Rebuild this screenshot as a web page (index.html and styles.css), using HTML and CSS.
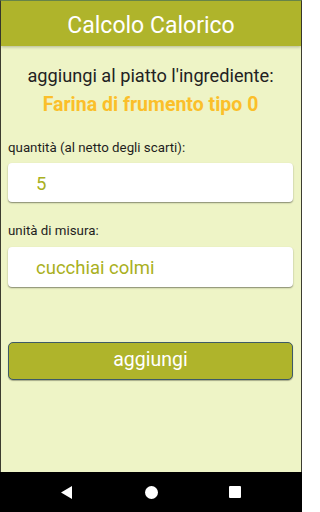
FILE: index.html
```html
<!DOCTYPE html>
<html>
<head>
<meta charset="utf-8">
<link rel="stylesheet" href="styles.css">
</head>
<body>
<div class="screen">
  <header class="appbar">Calcolo Calorico</header>
  <main class="content">
    <p class="intro">aggiungi al piatto l'ingrediente:</p>
    <p class="ingredient">Farina di frumento tipo 0</p>
    <label class="label">quantità (al netto degli scarti):</label>
    <div class="field">5</div>
    <label class="label second">unità di misura:</label>
    <div class="field tall">cucchiai colmi</div>
    <button class="btn">aggiungi</button>
  </main>
  <nav class="navbar">
    <svg width="12" height="13" viewBox="0 0 12 13"><polygon points="11,0 11,13 0,6.5" fill="#fff"/></svg>
    <svg width="13" height="13" viewBox="0 0 13 13"><circle cx="6.5" cy="6.5" r="6.5" fill="#fff"/></svg>
    <svg width="12" height="12" viewBox="0 0 12 12"><rect x="0" y="0" width="12" height="12" rx="1" fill="#fff"/></svg>
  </nav>
</div>
</body>
</html>
```
FILE: styles.css
```css
* { box-sizing: border-box; }
html, body { margin: 0; padding: 0; }
body { width: 302px; height: 512px; overflow: hidden; font-family: Roboto, "Liberation Sans", sans-serif; }
.screen {
  width: 302px;
  height: 512px;
  display: flex;
  flex-direction: column;
  border-left: 1px solid #3c3c30;
  border-right: 1px solid #3c3c30;
  border-top: 1px solid #6c8a4c;
  background: #eef4c6;
}
.appbar {
  height: 45px;
  flex: none;
  background: #afb42b;
  color: #fff;
  font-size: 23px;
  display: flex;
  align-items: center;
  justify-content: center;
  padding-top: 3px;
  box-shadow: 0 1px 3px rgba(0,0,0,0.25);
  position: relative;
  z-index: 1;
}
.content {
  flex: 1;
  display: flex;
  flex-direction: column;
  padding: 0 8px 0 7px;
}
.intro { margin: 19px 0 0; text-align: center; font-size: 18.2px; color: #222; line-height: 22px; white-space: nowrap; }
.ingredient { margin: 6px 0 0; text-align: center; font-size: 19.5px; font-weight: bold; color: #fbbf2a; line-height: 24px; white-space: nowrap; }
.label { margin-top: 23px; font-size: 13.3px; color: #1e1e1e; line-height: 16px; }
.label.second { margin-top: 21px; }
.field {
  margin-top: 7px;
  height: 39px;
  background: #fff;
  border-radius: 4px;
  box-shadow: 0 1px 1.5px rgba(0,0,0,0.45);
  color: #a9b021;
  font-size: 18.5px;
  display: flex;
  align-items: center;
  padding-left: 28px;
  padding-top: 2px;
}
.field.tall { height: 40px; margin-top: 8px; }
.btn {
  margin-top: 55px;
  height: 38px;
  background: #afb42b;
  border: 1.5px solid #3d5a68;
  border-radius: 5px;
  color: #fff;
  font-family: inherit;
  font-size: 19.5px;
  padding: 0 0 3px;
  box-shadow: 0 1px 1px rgba(0,0,0,0.3);
}
.navbar {
  height: 40px;
  flex: none;
  background: #000;
  display: flex;
  align-items: center;
  justify-content: space-between;
  padding: 0 61px 0 61px;
  margin: 0 -1px;
}
```
